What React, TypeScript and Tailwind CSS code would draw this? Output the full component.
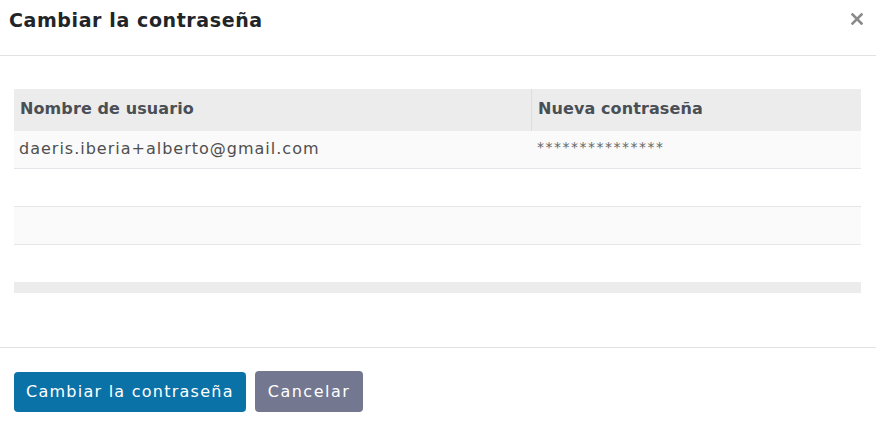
import React from "react";

const font = { fontFamily: "'DejaVu Sans', 'Noto Sans', sans-serif" };

export default function App() {
  return (
    <div className="w-[876px] h-[431px] bg-white flex flex-col" style={font}>
      <div className="h-[56px] border-b border-[#e2e2e2] flex items-center justify-between pl-[9px] pr-[13px] shrink-0">
        <h1 className="text-[19px] font-semibold text-[#212529] tracking-[0.6px] -mt-[14px]">Cambiar la contraseña</h1>
        <svg width="12" height="12" viewBox="0 0 12 12" className="-mt-[18px]">
          <path d="M1.5 1.5 L10.5 10.5 M10.5 1.5 L1.5 10.5" stroke="#8a8a8a" strokeWidth="2.6" strokeLinecap="square" />
        </svg>
      </div>
      <div className="px-[14px] pt-[33px] pb-[54px] border-b border-[#e2e2e2] shrink-0">
        <div className="w-[847px]">
          <div className="flex h-[42px] bg-[#ececec] text-[16px] font-semibold text-[#4a4f55] tracking-[0.1px]">
            <div className="w-[517px] flex items-center px-[6px] pb-[3px]">Nombre de usuario</div>
            <div className="flex-1 flex items-center px-[6px] pb-[3px] border-l border-[#dddddd]">Nueva contraseña</div>
          </div>
          <div className="flex h-[38px] bg-[#fafafa] border-b border-[#e6e6ea] text-[16px] text-[#4f4f4f]">
            <div className="w-[517px] flex items-center px-[5px] pb-[2px] tracking-[1px]">daeris.iberia+alberto@gmail.com</div>
            <div className="flex-1 flex items-center px-[6px] pb-[4px] text-[14px] text-[#666] tracking-[1.5px]">***************</div>
          </div>
          <div className="h-[38px] bg-white border-b border-[#e6e6ea]" />
          <div className="h-[38px] bg-[#fafafa] border-b border-[#e6e6ea]" />
          <div className="h-[37px] bg-white" />
          <div className="h-[11px] bg-[#ececec]" />
        </div>
      </div>
      <div className="flex items-center gap-[9px] px-[14px] pt-[23px]">
        <button className="h-[40px] px-[12px] rounded-[4px] bg-[#0b72a7] text-white text-[16px] tracking-[1.25px]">Cambiar la contraseña</button>
        <button className="h-[41px] px-[13px] rounded-[4px] bg-[#737890] text-white text-[16px] tracking-[1.5px]">Cancelar</button>
      </div>
    </div>
  );
}
